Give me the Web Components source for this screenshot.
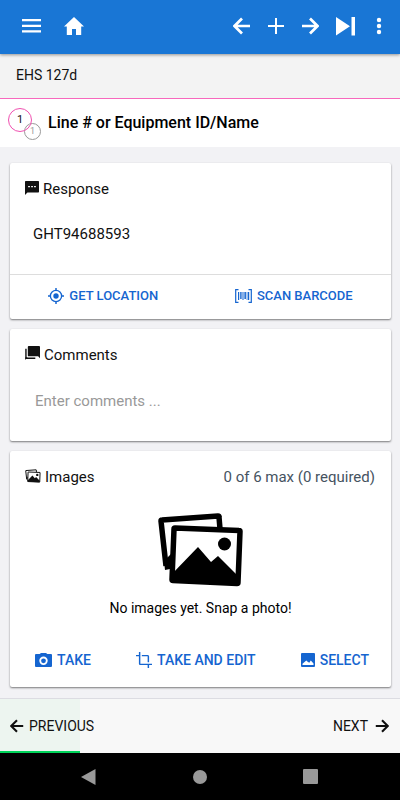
<!DOCTYPE html>
<html lang="en">
<head>
<meta charset="utf-8">
<meta name="viewport" content="width=device-width, initial-scale=1">
<title>EHS 127d</title>
<style>
    html, body {
        height: 100%;
        margin: 0;
    }
    body {
        font-family: Roboto, "Liberation Sans", sans-serif;
        color: #111;
        background: #f2f2f5;
    }
</style>
</head>
<body>
<inspection-page></inspection-page>

<script>
// Each icon: width, height, viewBox, content
const ICONS = {
    menu: [20, 14, '0 0 20 14', '<path d="M1 0h19v2.300H1zM1 5.700h19V8H1zM1 11.300h19v2.200H1z"/>'],
    home: [20, 20, '2 2 20 20', '<path d="M10 21v-6h4v6h5.200v-8.500H22L12 3 2 12.500h2.800V21z"/>'],
    back: [18, 18, '3 3 18 18', '<path d="M20 12H5M12 4.500L4.500 12l7.500 7.500" fill="none" stroke="currentColor" stroke-width="2.700"/>'],
    forward: [18, 18, '3 3 18 18', '<path d="M4 12h15M12 4.500l7.500 7.500-7.500 7.500" fill="none" stroke="currentColor" stroke-width="2.700"/>'],
    plus: [16, 16, '0 0 16 16', '<path d="M7 0h2v7h7v2H9v7H7V9H0V7h7z"/>'],
    last: [20, 20, '0 0 20 20', '<path d="M0 1l14 9.200L0 19.500zM15.500 1H19v18.500h-3.500z"/>'],
    more: [12, 18, '0 0 12 18', '<circle cx="6" cy="3" r="2.200"/><circle cx="6" cy="9" r="2.200"/><circle cx="6" cy="15" r="2.200"/>'],
    sms: [14, 14, '2 2 20 20', '<path d="M21 2H3c-.6 0-1 .4-1 1v19l3.500-3.500H21c.6 0 1-.4 1-1V3c0-.6-.4-1-1-1zM9 11H6.500V9H9zm4.300 0h-2.500V9h2.500zm4.200 0H15V9h2.500z"/>'],
    comments: [16, 16, '0 0 16 16', '<path d="M4 0h11q1 0 1 1v12l-2-2H4q-1 0-1-1V1q0-1 1-1z"/><path d="M1 3v10h10" fill="none" stroke="currentColor" stroke-width="1.500"/><path d="M.3 12h2.500L.3 15z"/>'],
    images: [88, 76, '0 0 88 76', '<path d="M9 54L4 9q0-1 1-1L61 4q1 0 1 1l1 12" fill="none" stroke="currentColor" stroke-width="5.500" stroke-linejoin="round"/><path d="M7 49l8-8-2 16-5 1z"/><path d="M18 16l64 2.500q1 0 1 1l-2 51q0 1-1 1l-64-3q-1 0-1-1l2-50.500q0-1 1-1z" fill="none" stroke="currentColor" stroke-width="5.500"/><circle cx="67.500" cy="32" r="6.500"/><path d="M14 63l27-28 13 15 7-6 20 20v8l-66-3z"/>'],
    location: [16, 16, '1 1 22 22', '<circle cx="12" cy="12" r="7.700" fill="none" stroke="currentColor" stroke-width="1.800"/><circle cx="12" cy="12" r="3.700"/><path d="M11 1h2v3h-2zM11 20h2v3h-2zM1 11h3v2H1zM20 11h3v2h-3z"/>'],
    barcode: [17, 14, '0 0 17 14', '<path d="M3.500.7H.7v12.600h2.800M13.500.7h2.800v12.600h-2.800" fill="none" stroke="currentColor" stroke-width="1.200"/><path d="M3 3h1.200v8H3zM5.200 3h1.400v7H5.200zM7.500 3h1v8h-1zM9.400 3h1.500v7H9.400zM11.700 3h.7v8h-.7zM13 3h1.200v8H13z"/>'],
    camera: [17, 14, '0 0 17 14', '<path fill-rule="evenodd" d="M6 0h5l1.300 1H16q1 0 1 1v11q0 1-1 1H1q-1 0-1-1V2q0-1 1-1h3.700zM8.500 3.600a4.200 4.200 0 100 8.400 4.200 4.200 0 000-8.400z"/><circle cx="8.500" cy="7.800" r="2.400"/>'],
    crop: [16, 16, '1 1 22 22', '<path d="M17 15h2V7c0-1.100-.9-2-2-2H9v2h8v8zM7 17V1H5v4H1v2h4v10c0 1.100.9 2 2 2h10v4h2v-4h4v-2H7z"/>'],
    picture: [14, 14, '0 0 14 14', '<path fill-rule="evenodd" d="M1 0h12q1 0 1 1v12q0 1-1 1H1q-1 0-1-1V1q0-1 1-1zM1.500 12h11v-1.500L9.800 7.500 8.300 9.800 7 9 5.300 7.500 1.500 10.800z"/>'],
    navback: [15, 16, '0 0 15 16', '<path d="M14.500 0v16L0 8z"/>'],
    navhome: [14, 14, '0 0 14 14', '<circle cx="7" cy="7" r="7"/>'],
    navrecent: [15, 15, '0 0 15 15', '<rect width="15" height="15" rx="1"/>']
};

class AppIcon extends HTMLElement {
    constructor() {
        super();
        this.attachShadow({mode: 'open'});
    }

    connectedCallback() {
        const [w, h, box, content] = ICONS[this.getAttribute('name')];
        const width = Number(this.getAttribute('width')) || w;
        const height = Math.round(h * width / w);
        this.shadowRoot.innerHTML = `
            <style>
                :host { display: block; flex: none; }
                svg { display: block; fill: currentColor; }
            </style>
            <svg width="${width}" height="${height}" viewBox="${box}" aria-hidden="true">${content}</svg>
        `;
    }
}

class IconButton extends HTMLElement {
    constructor() {
        super();
        this.attachShadow({mode: 'open'});
    }

    connectedCallback() {
        this.shadowRoot.innerHTML = `
            <style>
                :host { display: block; }
                button {
                    display: block;
                    padding: 0;
                    border: 0;
                    background: none;
                    color: inherit;
                    cursor: pointer;
                }
            </style>
            <button type="button" aria-label="${this.getAttribute('label')}">
                <app-icon name="${this.getAttribute('icon')}"></app-icon>
            </button>
        `;
    }
}

// Flat button: icon and caption, the icon goes last with the "trailing" attribute
class TextButton extends HTMLElement {
    constructor() {
        super();
        this.attachShadow({mode: 'open'});
    }

    connectedCallback() {
        this.shadowRoot.innerHTML = `
            <style>
                :host { display: block; color: #1565d0; font-size: 14px; font-weight: 500; }
                button {
                    display: flex;
                    align-items: center;
                    gap: 5px;
                    padding: 0;
                    border: 0;
                    background: none;
                    color: inherit;
                    font: inherit;
                    line-height: 20px;
                    white-space: nowrap;
                    cursor: pointer;
                }
                :host([trailing]) button { flex-direction: row-reverse; gap: 7px; }
            </style>
            <button type="button">
                <app-icon name="${this.getAttribute('icon')}" width="${this.getAttribute('size') || ''}"></app-icon>
                <slot></slot>
            </button>
        `;
    }
}

class TopBar extends HTMLElement {
    constructor() {
        super();
        this.attachShadow({mode: 'open'}).innerHTML = `
            <style>
                :host { display: block; position: relative; }
                header {
                    display: flex;
                    justify-content: space-between;
                    box-sizing: border-box;
                    height: 54px;
                    padding: 0 15px 2px 21px;
                    background: #1976d5;
                    color: #fff;
                    box-shadow: 0 1px 3px rgba(0, 0, 0, .4);
                }
                nav { display: flex; align-items: center; gap: 23px; }
                .actions { gap: 17px; }
            </style>
            <header>
                <nav>
                    <icon-button icon="menu" label="Menu"></icon-button>
                    <icon-button icon="home" label="Home"></icon-button>
                </nav>
                <nav class="actions">
                    <icon-button icon="back" label="Back"></icon-button>
                    <icon-button icon="plus" label="Add"></icon-button>
                    <icon-button icon="forward" label="Forward"></icon-button>
                    <icon-button icon="last" label="Last"></icon-button>
                    <icon-button icon="more" label="More"></icon-button>
                </nav>
            </header>
        `;
    }
}

class QuestionTitle extends HTMLElement {
    constructor() {
        super();
        this.attachShadow({mode: 'open'});
    }

    connectedCallback() {
        this.shadowRoot.innerHTML = `
            <style>
                :host { display: block; }
                .form {
                    padding: 10px 16px 12px;
                    background: #f3f3f3;
                    border-bottom: 1px solid #f768bd;
                    font-size: 14px;
                    line-height: 22px;
                }
                .question {
                    display: flex;
                    align-items: center;
                    gap: 7px;
                    padding: 7px 8px;
                    background: #fff;
                }
                .badge { position: relative; width: 33px; height: 34px; flex: none; }
                .badge span {
                    position: absolute;
                    box-sizing: border-box;
                    border: 1px solid;
                    border-radius: 50%;
                    text-align: center;
                }
                .badge .main {
                    left: 0;
                    top: 2px;
                    width: 24px;
                    height: 24px;
                    border-color: #f050b0;
                    font-size: 11px;
                    line-height: 22px;
                }
                .badge .sub {
                    right: 0;
                    bottom: 0;
                    width: 17px;
                    height: 17px;
                    color: #999;
                    font-size: 9px;
                    line-height: 15px;
                }
                h1 { margin: 0; font-size: 16px; font-weight: 500; line-height: 20px; color: #000; }
            </style>
            <div class="form">${this.getAttribute('form')}</div>
            <div class="question">
                <div class="badge"><span class="sub">1</span><span class="main">1</span></div>
                <h1><slot></slot></h1>
            </div>
        `;
    }
}

class FormCard extends HTMLElement {
    constructor() {
        super();
        this.attachShadow({mode: 'open'});
    }

    connectedCallback() {
        this.shadowRoot.innerHTML = `
            <style>
                :host {
                    display: block;
                    background: #fff;
                    border-radius: 2px;
                    box-shadow: 0 1px 2px rgba(0, 0, 0, .5);
                }
                .head {
                    display: flex;
                    align-items: center;
                    gap: 4px;
                    padding: 15px 16px 0 15px;
                    font-size: 15px;
                    line-height: 22px;
                }
                app-icon { margin-bottom: 3px; }
                h2 { flex: 1; margin: 0; font-size: 15px; font-weight: 400; }
                ::slotted([slot="note"]) { color: #46535f; }
            </style>
            <div class="head">
                <app-icon name="${this.getAttribute('icon')}" width="${this.getAttribute('size')}"></app-icon>
                <h2>${this.getAttribute('heading')}</h2>
                <slot name="note"></slot>
            </div>
            <slot></slot>
        `;
    }
}

class PageFooter extends HTMLElement {
    constructor() {
        super();
        this.attachShadow({mode: 'open'}).innerHTML = `
            <style>
                :host { display: block; }
                .pager {
                    display: flex;
                    justify-content: space-between;
                    padding: 17px 11px 15px 10px;
                    border-top: 1px solid #dcdce2;
                    border-bottom: 2px solid transparent;
                    background:
                        linear-gradient(#00d45a, #00d45a) 0 100% / 20% 2px no-repeat border-box,
                        linear-gradient(#edf5f0, #edf5f0) 0 0 / 20% 100% no-repeat border-box,
                        #f8f8f8;
                }
                text-button { color: #111; font-weight: 400; }
                .system {
                    display: flex;
                    justify-content: space-between;
                    align-items: center;
                    height: 47px;
                    padding: 0 82px 0 81px;
                    background: #000;
                    color: #999;
                }
            </style>
            <div class="pager">
                <text-button icon="back" size="14">PREVIOUS</text-button>
                <text-button icon="forward" size="14" trailing>NEXT</text-button>
            </div>
            <div class="system">
                <icon-button icon="navback" label="System back"></icon-button>
                <icon-button icon="navhome" label="System home"></icon-button>
                <icon-button icon="navrecent" label="Recent apps"></icon-button>
            </div>
        `;
    }
}

class InspectionPage extends HTMLElement {
    constructor() {
        super();
        this.attachShadow({mode: 'open'}).innerHTML = `
            <style>
                :host { display: flex; flex-direction: column; min-height: 100%; }
                main {
                    flex: 1;
                    display: flex;
                    flex-direction: column;
                    gap: 10px;
                    padding: 16px 9px 11px 10px;
                }
                input, textarea {
                    display: block;
                    box-sizing: border-box;
                    width: 100%;
                    margin: 0;
                    border: 0;
                    outline: 0;
                    background: none;
                    color: #111;
                    font: 400 15px/22px Roboto, "Liberation Sans", sans-serif;
                    resize: none;
                }
                input { height: 74px; padding: 0 23px 6px; }
                textarea { height: 75px; padding: 24px 25px 0; }
                textarea::placeholder { color: #999; opacity: 1; }
                .actions {
                    display: flex;
                    justify-content: space-around;
                    padding: 11px 0 13px;
                    border-top: 1px solid #ddd;
                }
                .response text-button { font-size: 13px; }
                .photos { justify-content: space-between; padding: 32px 22px 17px 25px; border: 0; }
                .empty {
                    display: flex;
                    flex-direction: column;
                    align-items: center;
                    gap: 10px;
                    padding-top: 24px;
                    font-size: 14px;
                    line-height: 20px;
                    color: #000;
                }
                .empty p { margin: 0; }
            </style>
            <top-bar></top-bar>
            <question-title form="EHS 127d">Line # or Equipment ID/Name</question-title>
            <main>
                <form-card icon="sms" size="14" heading="Response">
                    <input type="text" aria-label="Response" value="GHT94688593">
                    <div class="actions response">
                        <text-button icon="location">GET LOCATION</text-button>
                        <text-button icon="barcode">SCAN BARCODE</text-button>
                    </div>
                </form-card>
                <form-card icon="comments" size="15" heading="Comments">
                    <textarea aria-label="Comments" placeholder="Enter comments ..."></textarea>
                </form-card>
                <form-card icon="images" size="16" heading="Images">
                    <span slot="note">0 of 6 max (0 required)</span>
                    <div class="empty">
                        <app-icon name="images" width="88"></app-icon>
                        <p>No images yet. Snap a photo!</p>
                    </div>
                    <div class="actions photos">
                        <text-button icon="camera">TAKE</text-button>
                        <text-button icon="crop">TAKE AND EDIT</text-button>
                        <text-button icon="picture">SELECT</text-button>
                    </div>
                </form-card>
            </main>
            <page-footer></page-footer>
        `;
    }
}

customElements.define('app-icon', AppIcon);
customElements.define('icon-button', IconButton);
customElements.define('text-button', TextButton);
customElements.define('top-bar', TopBar);
customElements.define('question-title', QuestionTitle);
customElements.define('form-card', FormCard);
customElements.define('page-footer', PageFooter);
customElements.define('inspection-page', InspectionPage);
</script>
</body>
</html>
